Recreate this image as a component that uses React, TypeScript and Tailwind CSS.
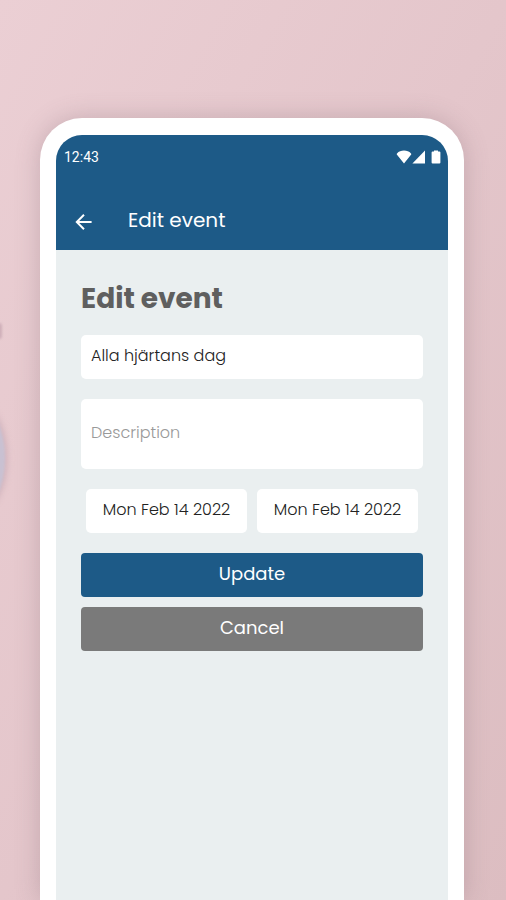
import { useState } from "react";

function StatusBar() {
  return (
    <div className="flex flex-row items-center justify-between pl-2 pr-1.5 pt-3 font-['Roboto',sans-serif]">
      <span className="text-sm leading-5">12:43</span>
      <div className="flex flex-row items-center">
        <svg width="16" height="14" viewBox="0 0 16 14" fill="currentColor" aria-hidden="true">
          <path d="M8 13.5 L0.8 4.6 C0.6 4.2 0.7 3.8 1 3.5 C2.8 1.4 5.2 0.6 8 0.6 C10.8 0.6 13.2 1.4 15 3.5 C15.3 3.8 15.4 4.2 15.2 4.6 Z" />
        </svg>
        <svg width="14" height="14" viewBox="0 0 14 14" fill="currentColor" aria-hidden="true">
          <path d="M13 0.6 V13.6 H0.4 Z" />
        </svg>
        <svg className="ml-1" width="12" height="14" viewBox="0 0 12 14" fill="currentColor" aria-hidden="true">
          <path d="M4 0.4 H8 V1.6 H9.4 Q10.4 1.6 10.4 2.6 V12.6 Q10.4 13.6 9.4 13.6 H2.6 Q1.6 13.6 1.6 12.6 V2.6 Q1.6 1.6 2.6 1.6 H4 Z" />
        </svg>
      </div>
    </div>
  );
}

function Header() {
  return (
    <header className="bg-[#1d5a87] text-white h-[115px] flex flex-col justify-between">
      <StatusBar />
      <div className="flex flex-row items-center gap-8 pl-4 pb-3">
        <button type="button" aria-label="Back" className="p-0.5 mt-1">
          <svg width="20" height="20" viewBox="0 0 20 20" fill="none" stroke="currentColor" strokeWidth="2">
            <path d="M17.6 10 H3 M10 2.8 L2.8 10 L10 17.2" />
          </svg>
        </button>
        <div className="text-xl leading-9">Edit event</div>
      </div>
    </header>
  );
}

function EventForm() {
  const [title, setTitle] = useState("Alla hjärtans dag");
  const [description, setDescription] = useState("");

  return (
    <form className="flex flex-col px-[25px] pt-7 text-base text-[#222222]" onSubmit={(e) => e.preventDefault()}>
      <h1 className="pt-px text-[28px] leading-10 font-bold text-[#5f5f5f]">Edit event</h1>
      <input
        type="text"
        aria-label="Title"
        value={title}
        onChange={(e) => setTitle(e.target.value)}
        className="mt-4 h-11 w-full rounded-[5px] bg-white px-2.5 pb-1 font-light outline-none"
      />
      <textarea
        aria-label="Description"
        placeholder="Description"
        value={description}
        onChange={(e) => setDescription(e.target.value)}
        className="mt-5 h-[70px] w-full resize-none rounded-[5px] bg-white px-2.5 py-[22px] font-light outline-none placeholder:text-[#999999]"
      />
      <div className="mt-5 flex flex-row gap-2.5 px-[5px]">
        <button type="button" className="h-11 flex-1 rounded-[5px] bg-white pb-0.5 font-light whitespace-nowrap">
          Mon Feb 14 2022
        </button>
        <button type="button" className="h-11 flex-1 rounded-[5px] bg-white pb-0.5 font-light whitespace-nowrap">
          Mon Feb 14 2022
        </button>
      </div>
      <button type="submit" className="mt-5 h-11 rounded-[4px] bg-[#1d5a87] pb-0.5 text-lg text-white">
        Update
      </button>
      <button type="button" className="mt-2.5 h-11 rounded-[4px] bg-[#7a7a7a] pb-0.5 text-lg text-white">
        Cancel
      </button>
    </form>
  );
}

export default function App() {
  return (
    <main className="relative flex min-h-screen flex-col overflow-hidden bg-linear-to-br from-[#ebcfd4] via-[#e4c6cb] to-[#dcbdc1] pl-10 pr-[42px] pt-[118px] font-['Poppins','Inter',sans-serif]">
      <div className="absolute -left-14 top-[402px] h-28 w-[61px] rounded-[50%] bg-[#c9c1d2] shadow-[2px_0_6px_#cdb0ba] blur-[1px]" />
      <div className="absolute -left-1 top-[323px] h-4 w-1.5 rounded-full bg-[#cfb0b9] blur-[1px]" />
      <div className="relative flex flex-1 flex-col rounded-t-[42px] bg-white px-4 pt-[17px] shadow-[0_0_24px_rgba(120,95,105,0.3)]">
        <div className="flex flex-1 flex-col overflow-hidden rounded-t-[26px] bg-[#eaeff0]">
          <Header />
          <EventForm />
        </div>
      </div>
    </main>
  );
}
